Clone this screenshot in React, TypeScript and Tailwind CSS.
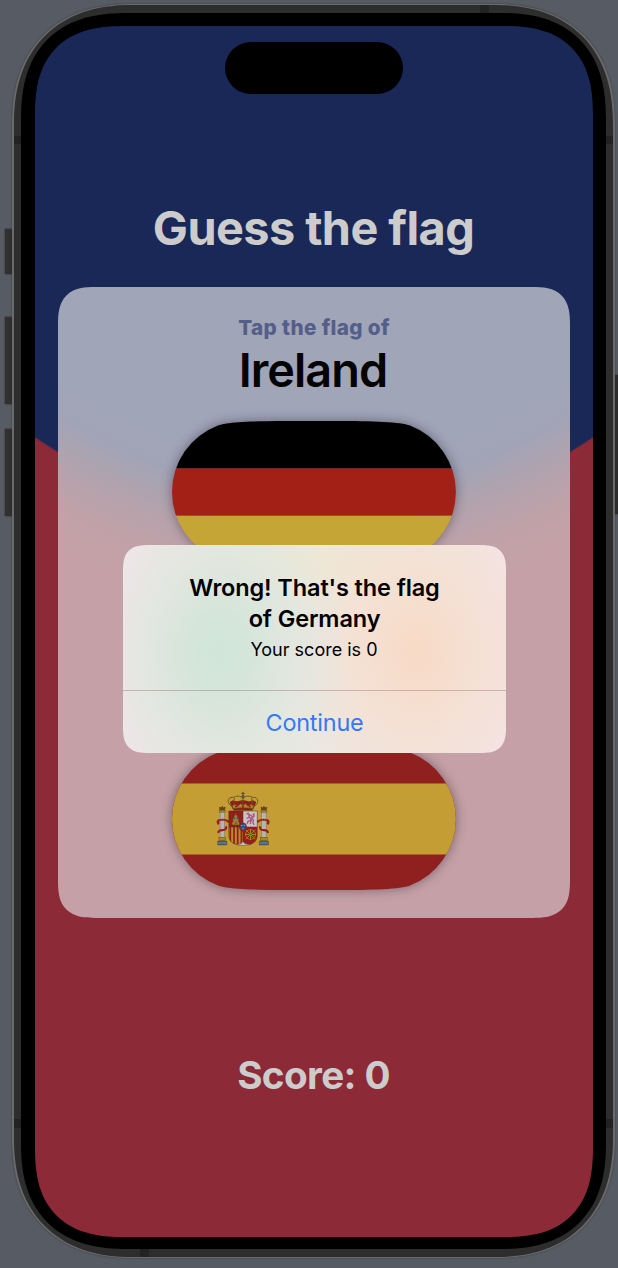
import type { ReactNode } from "react";

const FLAG_SHAPE =
  "M0 71A71 71 0 0 1 46 4.6C56 .9 82 0 122 0H162C202 0 228 .9 238 4.6A71 71 0 0 1 238 137.4C228 141.1 202 142 162 142H122C82 142 56 141.1 46 137.4A71 71 0 0 1 0 71Z";

function Flag({ id, label, children }: { id: string; label: string; children: ReactNode }) {
  return (
    <button aria-label={label} className="h-[142px] w-[284px] shrink-0">
      <svg
        viewBox="0 0 284 142"
        className="block h-full w-full overflow-visible drop-shadow-[0_0_6px_rgba(20,10,30,0.42)]"
      >
        <clipPath id={id}>
          <path d={FLAG_SHAPE} />
        </clipPath>
        <g clipPath={`url(#${id})`}>{children}</g>
      </svg>
    </button>
  );
}

function Pillar({ x, flip }: { x: number; flip?: boolean }) {
  return (
    <g transform={flip ? `translate(${x} 0) scale(-1 1)` : `translate(${x} 0)`}>
      <path d="M-3.4 16.8-2.4 15.8-1.2 16.4 0 14.8 1.2 16.4 2.4 15.8 3.4 16.8 2.4 19.2H-2.4Z" fill="#6d4416" />
      <rect x="-3" y="19.4" width="6" height="2" fill="#a68a20" stroke="#4b4420" strokeWidth=".4" />
      <rect x="-2.2" y="21.4" width="4.4" height="25.4" fill="#b4b4b2" stroke="#666" strokeWidth=".4" />
      <rect x="-3.4" y="46.2" width="6.8" height="3.4" fill="#a68a20" stroke="#4b4420" strokeWidth=".4" />
      <path d="M-4.6 50h9.2v4h-9.2z" fill="#476078" stroke="#33404a" strokeWidth=".4" />
      <path d="M-4.4 52h8.8" stroke="#8a97a0" strokeWidth=".7" />
      <path
        d="M6.8 31C3.8 28.8-.6 28.4-3.6 29.4-5.2 30.6-4.6 32-3.6 33.4M3.6 35.4C4.6 38 2.8 39 0 39.2-2.6 39.4-4.4 40-3.8 42"
        fill="none"
        stroke="#981d1d"
        strokeWidth="2.2"
      />
      <path d="M-2.8 29.3C-.4 28.9 2.3 29.3 5 30.4" fill="none" stroke="#c49b4c" strokeWidth=".6" strokeDasharray="1 .8" />
    </g>
  );
}

function CoatOfArms() {
  return (
    <g transform="translate(44.5 43)">
      <Pillar x={5.8} />
      <Pillar x={47.4} flip />
      <path d="M26.5.8v5M24.9 2.4h3.2" stroke="#514b1e" strokeWidth="1" />
      <circle cx="26.5" cy="5.6" r="1.4" fill="#345f82" stroke="#5b501c" strokeWidth=".4" />
      <path d="M13.4 11.4C15 9 18 9.4 20 10.4L26.5 9 33 10.4C35 9.4 38 9 39.6 11.4L37 18H16Z" fill="#8f1c1d" />
      <path
        d="M16.2 16C8.6 11.4 12 5.4 17 6.4 21.5 3.8 25.4 5.6 26.5 8 27.6 5.6 31.5 3.8 36 6.4 41 5.4 44.4 11.4 36.8 16M26.5 8V15M18 7.2C16.4 10.2 17.4 13 19 15.4M35 7.2C36.6 10.2 35.6 13 34 15.4"
        fill="none"
        stroke="#655b23"
        strokeWidth="1"
      />
      <path d="m15.8 14.4 3.5-1 2.2 2 2.4-2.8 2.6 2.2 2.6-2.2 2.4 2.8 2.2-2 3.5 1-1.4 4.6H17.2Z" fill="#ad8823" stroke="#64501b" strokeWidth=".4" />
      <path d="M19.5 15.6h.1M26.5 15.8h.1M33.3 15.6h.1" stroke="#8f1c1d" strokeWidth="2" strokeLinecap="round" />
      <path d="M17.2 17.6c5.8-1.2 12.8-1.2 18.6 0v1.7H17.2z" fill="#8f1c1d" stroke="#5b4c1b" strokeWidth=".5" />
      <clipPath id="shield">
        <path d="M12.2 20h28.6v23.4c0 11.4-11.6 11.6-14.3 7.2-2.7 4.4-14.3 4.2-14.3-7.2Z" />
      </clipPath>
      <path d="m19 53.6 7.5-4.6 7.5 4.6c-5 1-10 1-15 0Z" fill="#c4c4c0" stroke="#59563a" strokeWidth=".5" />
      <g clipPath="url(#shield)">
        <path d="M12 20h14.5v16H12z" fill="#951d1d" />
        <path d="M26.5 20H41v16H26.5z" fill="#c8c5c6" />
        <path d="M12 36h14.5v18H12z" fill="#b68e25" />
        <path d="M13.8 36v18M17.5 36v18M21.2 36v18M24.9 36v18" stroke="#951d1d" strokeWidth="1.7" />
        <path d="M26.5 36H41v18H26.5z" fill="#951d1d" />
      </g>
      <path d="M15.4 34v-3h.9v-4.6h1.2v-2.2h1.1v-2h1.3v2h1.1v2.2h1.2v4.6h.9v3Z" fill="#a77e1e" stroke="#4d391b" strokeWidth=".5" />
      <path d="M17.7 27.2h.1M20.9 27.2h.1M19.4 32h.1" stroke="#25549b" strokeWidth="1.7" strokeLinecap="round" />
      <path
        d="m30 23.2 1.8-.8 1 1.4 1.8.6 1.4 2.2 1.7-1.5-.9-1.8 1.4-.8M32.2 24l.5 2.6-2.8.8M33 25.8l1.8 3.6-3.2.8-1 2.6M34.4 27l2.6 2-.6 2.8 1.4 2M34.8 29.4 33.6 33"
        fill="none"
        stroke="#ad5585"
        strokeWidth="1.4"
      />
      <circle cx="34" cy="43.5" r="4.9" fill="none" stroke="#b58b28" strokeWidth="1" strokeDasharray="1.2 .5" />
      <path d="M29.2 38.8 38.8 48.2M38.8 38.8 29.2 48.2M34 38v11M28.5 43.5h11" stroke="#b58b28" strokeWidth=".9" />
      <circle cx="34" cy="43.5" r="1.1" fill="#33734a" />
      <path d="M12.2 20h28.6v23.4c0 11.4-11.6 11.6-14.3 7.2-2.7 4.4-14.3 4.2-14.3-7.2ZM26.5 20v30M12.2 36h28.6" fill="none" stroke="#5b2b1c" strokeWidth=".5" />
      <ellipse cx="26.5" cy="36" rx="3.4" ry="4" fill="#234f96" stroke="#8c1f25" strokeWidth="1" />
      <path d="M25.2 34.4h.1M27.7 34.4h.1M26.5 37.5h.1" stroke="#b69733" strokeWidth="1.5" strokeLinecap="round" />
    </g>
  );
}

function ScoreAlert() {
  return (
    <div
      role="alertdialog"
      className="absolute left-[87.5px] top-[519px] flex h-[208px] w-[383px] flex-col overflow-hidden rounded-[26px] [corner-shape:superellipse(1.47)] bg-[radial-gradient(ellipse_130px_170px_at_96px_108px,#d0e5d8_0%,#d2e5d9e6_22%,#dce6ddb0_55%,#e6e6e200_100%),radial-gradient(ellipse_135px_170px_at_294px_108px,#f8dac5_0%,#f7dcc9e6_20%,#f5dfd0b0_52%,#f3e2dd00_100%),radial-gradient(ellipse_180px_90px_at_200px_0px,#eee9d4_0%,#eee8d700_100%),linear-gradient(90deg,#f1e6e9_0%,#ebe9e4_50%,#f4e4e6_100%)] text-center text-black"
    >
      <div className="flex h-[146px] flex-col border-b border-[#78463a]/30 pt-[27px]">
        <h2 className="pl-px text-[23.5px] font-semibold leading-[31px] tracking-[-0.12px]">
          Wrong! That's the flag
          <br />
          of Germany
        </h2>
        <p className="pt-px text-[18px] leading-[30px]">Your score is 0</p>
      </div>
      <button className="flex flex-1 items-center justify-center pl-px pt-px text-[23.4px] tracking-[-0.2px] text-[#3379f6]">
        Continue
      </button>
    </div>
  );
}

function Screen() {
  return (
    <main className="relative flex h-[1211px] w-[558px] flex-col items-center overflow-hidden rounded-[90px] [corner-shape:superellipse(1.34)] bg-[radial-gradient(circle_at_279px_0px,#1a2858_496px,#8c2a37_498px)] pt-[174px]">
      <div className="absolute left-[190px] top-4 h-[52px] w-[178px] rounded-full bg-black" />
      <h1 className="pr-px text-[46.8px] font-bold leading-[56px] tracking-[-0.55px] text-[#cccccc]">Guess the flag</h1>
      <section className="mt-[31px] flex h-[631px] w-[512px] flex-col items-center rounded-[38px] [corner-shape:superellipse(1.47)] bg-[radial-gradient(circle_at_256px_-261px,#a0a5b8_425px,#a1a4b6_465px,#b3a3ad_505px,#c1a1a8_545px,#c5a1a7_590px)] pt-7">
        <p className="text-[20.7px] font-extrabold leading-[26px] tracking-[0.38px] text-[#535f88]">Tap the flag of</p>
        <p className="pr-0.5 text-[46.8px] font-semibold leading-[59px] tracking-[-0.95px] text-[#040404]">Ireland</p>
        <div className="mt-[20.8px] flex flex-col gap-[21.4px]">
          <Flag id="germany" label="Germany">
            <path d="M0 0h284v47.4H0z" fill="#000" />
            <path d="M0 47.4h284v47.4H0z" fill="#a22016" />
            <path d="M0 94.8h284V142H0z" fill="#c4a535" />
          </Flag>
          <Flag id="ireland" label="Ireland">
            <path d="M0 0h95v142H0z" fill="#237c4c" />
            <path d="M95 0h95v142H95z" fill="#cccccc" />
            <path d="M190 0h94v142h-94z" fill="#cb7736" />
          </Flag>
          <Flag id="spain" label="Spain">
            <path d="M0 0h284v142H0z" fill="#902020" />
            <path d="M0 35.5h284v71H0z" fill="#c49e35" />
            <CoatOfArms />
          </Flag>
        </div>
      </section>
      <p className="mt-[133px] pr-px text-[38.7px] font-bold leading-[48px] tracking-[-0.65px] text-[#cccccc]">
        Score: 0
      </p>
      <ScoreAlert />
    </main>
  );
}

export default function App() {
  return (
    <div className="flex h-[1268px] w-[618px] items-start overflow-hidden bg-[#575c64] font-['Inter',sans-serif]">
      <div className="flex w-3 shrink-0 flex-col items-end pt-[229px]">
        <div className="h-[45px] w-[7px] bg-[#303030] shadow-[0_0_2px_#222]" />
        <div className="mt-[43px] h-[87px] w-[7px] bg-[#303030] shadow-[0_0_2px_#222]" />
        <div className="mt-[25px] h-[87px] w-[7px] bg-[#303030] shadow-[0_0_2px_#222]" />
      </div>
      <div className="relative mt-1 h-[1254px] w-[603px] shrink-0 rounded-[120px] [corner-shape:superellipse(1.2)] border-x-2 border-y border-[#6a6a6a] bg-[#2d2d2d] px-[7px] py-2 shadow-[0_0_2px_rgba(30,30,30,0.6)]">
        <div className="absolute left-0 top-[131px] h-2 w-full bg-[#222222]" />
        <div className="absolute left-0 top-[1114px] h-[9px] w-full bg-[#222222]" />
        <div className="absolute left-[466px] top-0 h-2 w-[9px] bg-[#222222]" />
        <div className="absolute bottom-0 left-[126px] h-2 w-[9px] bg-[#222222]" />
        <div className="relative h-[1236px] w-[585px] rounded-[106px] [corner-shape:superellipse(1.27)] bg-black pl-[14px] pt-[13px]">
          <Screen />
        </div>
      </div>
      <div className="mt-[375px] h-[139px] w-[3px] shrink-0 bg-[#2d2d2d] shadow-[0_0_2px_#222]" />
    </div>
  );
}
